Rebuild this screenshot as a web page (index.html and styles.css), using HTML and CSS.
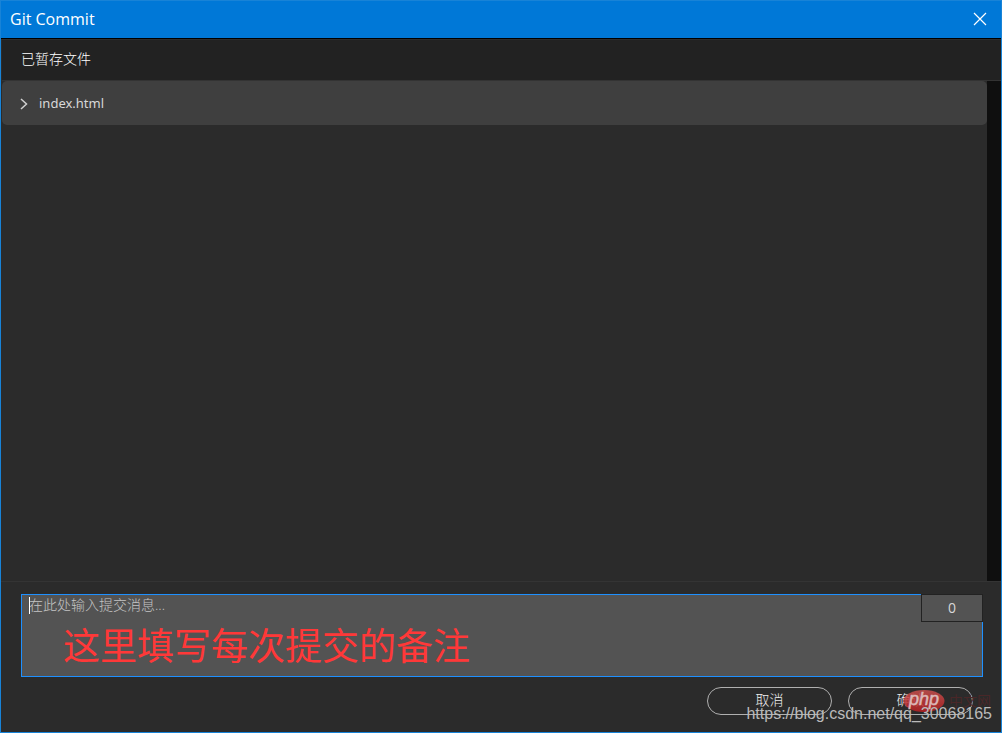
FILE: index.html
```html
<!DOCTYPE html>
<html lang="zh-CN">
<head>
<meta charset="utf-8">
<title>Git Commit</title>
<link rel="stylesheet" href="styles.css">
</head>
<body>
<main class="dialog">
  <header class="titlebar">
    <h1 class="title">Git Commit</h1>
    <button class="close" type="button" aria-label="Close">
      <svg width="14" height="14" viewBox="0 0 14 14"><path d="M1 1 13 13M13 1 1 13" fill="none" stroke="#fff" stroke-width="1.2"/></svg>
    </button>
  </header>
  <h2 class="staged">已暂存文件</h2>
  <section class="files">
    <div class="list">
      <button class="file" type="button">
        <svg width="8" height="12" viewBox="0 0 8 12"><path d="M1 1 6.5 6 1 11" fill="none" stroke="#d0d0d0" stroke-width="1.5"/></svg>
        <span>index.html</span>
      </button>
    </div>
    <div class="track"></div>
  </section>
  <form class="footer">
    <div class="message">
      <textarea class="input" aria-label="提交消息" placeholder="在此处输入提交消息..."></textarea>
      <span class="caret"></span>
      <output class="count">0</output>
      <span class="note">这里填写每次提交的备注</span>
    </div>
    <div class="actions">
      <button class="action" type="button">取消</button>
      <button class="action" type="button">确认</button>
    </div>
  </form>
  <div class="brand">
    <svg width="42" height="24" viewBox="0 0 42 24">
      <defs><linearGradient id="red" x1="0" y1="0" x2="0" y2="1"><stop offset="0" stop-color="#c9514f"/><stop offset="1" stop-color="#b82022"/></linearGradient></defs>
      <ellipse cx="21" cy="12" rx="20.5" ry="11" fill="url(#red)" fill-opacity=".85"/>
      <text class="brand-php" x="21" y="16" text-anchor="middle">php</text>
    </svg>
    <span class="brand-name">中文网</span>
  </div>
  <span class="watermark">https://blog.csdn.net/qq_30068165</span>
</main>
</body>
</html>
```
FILE: styles.css
```css
* { box-sizing: border-box; }
body {
  margin: 0;
  background: #2b2b2b;
  font-family: "Open Sans", "Noto Sans CJK SC", sans-serif;
  font-size: 14px;
  color: #d8d8d8;
}
button { font: inherit; color: inherit; background: none; border: 0; padding: 0; }
svg { display: block; }
.dialog {
  position: relative;
  display: flex;
  flex-direction: column;
  min-height: 100vh;
  border: 1px solid #1883d7;
  overflow: hidden;
}
.titlebar {
  display: flex;
  align-items: center;
  justify-content: space-between;
  height: 38px;
  padding: 0 14px 2px 9px;
  background: #0078d7;
  border-bottom: 1px solid #000;
}
.title {
  margin: 0;
  font-family: "Open Sans", sans-serif;
  font-size: 16px;
  font-weight: 400;
  color: #fff;
}
.staged {
  margin: 0 0 0 1px;
  height: 42px;
  padding: 0 19px;
  line-height: 38px;
  font-size: 14px;
  font-weight: 300;
  color: #fff;
  background: #222;
  border-top: 1px solid #2d2d2d;
  border-bottom: 1px solid #333;
}
.files { display: flex; flex: 1; padding-left: 1px; }
.list { flex: 1; }
.file {
  display: flex;
  align-items: center;
  gap: 11px;
  width: 100%;
  height: 44px;
  padding: 0 18px;
  border-radius: 5px;
  background: #3f3f3f;
  font-family: "Noto Sans", sans-serif;
  font-size: 13px;
}
.file svg { margin-top: 2px; }
.track { width: 14px; background: #0f0f0f; }
.footer {
  padding: 12px 18px 17px 20px;
  border-top: 1px solid #343434;
}
.message { position: relative; }
.input {
  display: block;
  width: 100%;
  height: 83px;
  padding: 0 7px;
  border: 1px solid #1e90ff;
  outline: 0;
  resize: none;
  background: #535353;
  color: #d8d8d8;
  font: 300 14px/20px "Open Sans", "Noto Sans CJK SC", sans-serif;
}
.input::placeholder { color: #c4c4c4; opacity: 1; }
.caret { position: absolute; left: 8px; top: 3px; width: 1px; height: 17px; background: #fff; }
.count {
  position: absolute;
  right: 0;
  top: 0;
  width: 62px;
  height: 28px;
  border: 1px solid #222;
  background: #535353;
  text-align: center;
  line-height: 26px;
}
.note {
  position: absolute;
  left: 42px;
  top: 26px;
  font-size: 37px;
  line-height: 52px;
  color: #ff3838;
  white-space: nowrap;
  pointer-events: none;
}
.actions {
  display: flex;
  justify-content: flex-end;
  gap: 16px;
  padding: 10px 10px 0 0;
}
.action {
  width: 125px;
  height: 28px;
  padding-bottom: 2px;
  border: 1px solid #b0b0b0;
  border-radius: 14px;
  color: #eee;
  font-weight: 300;
  line-height: 24px;
}
.brand {
  position: absolute;
  right: 0;
  bottom: 19px;
  display: flex;
  align-items: center;
  gap: 4px;
  pointer-events: none;
}
.brand-php { font: italic 400 18px "Liberation Sans", sans-serif; fill: #dcb8b8; stroke: #dcb8b8; stroke-width: .5px; }
.brand-name { font-size: 14px; line-height: 24px; width: 52px; color: #492728; }
.watermark {
  position: absolute;
  right: 9px;
  bottom: 8px;
  font: 16px/20px "Liberation Sans", sans-serif;
  color: #bababa;
  pointer-events: none;
}
```
